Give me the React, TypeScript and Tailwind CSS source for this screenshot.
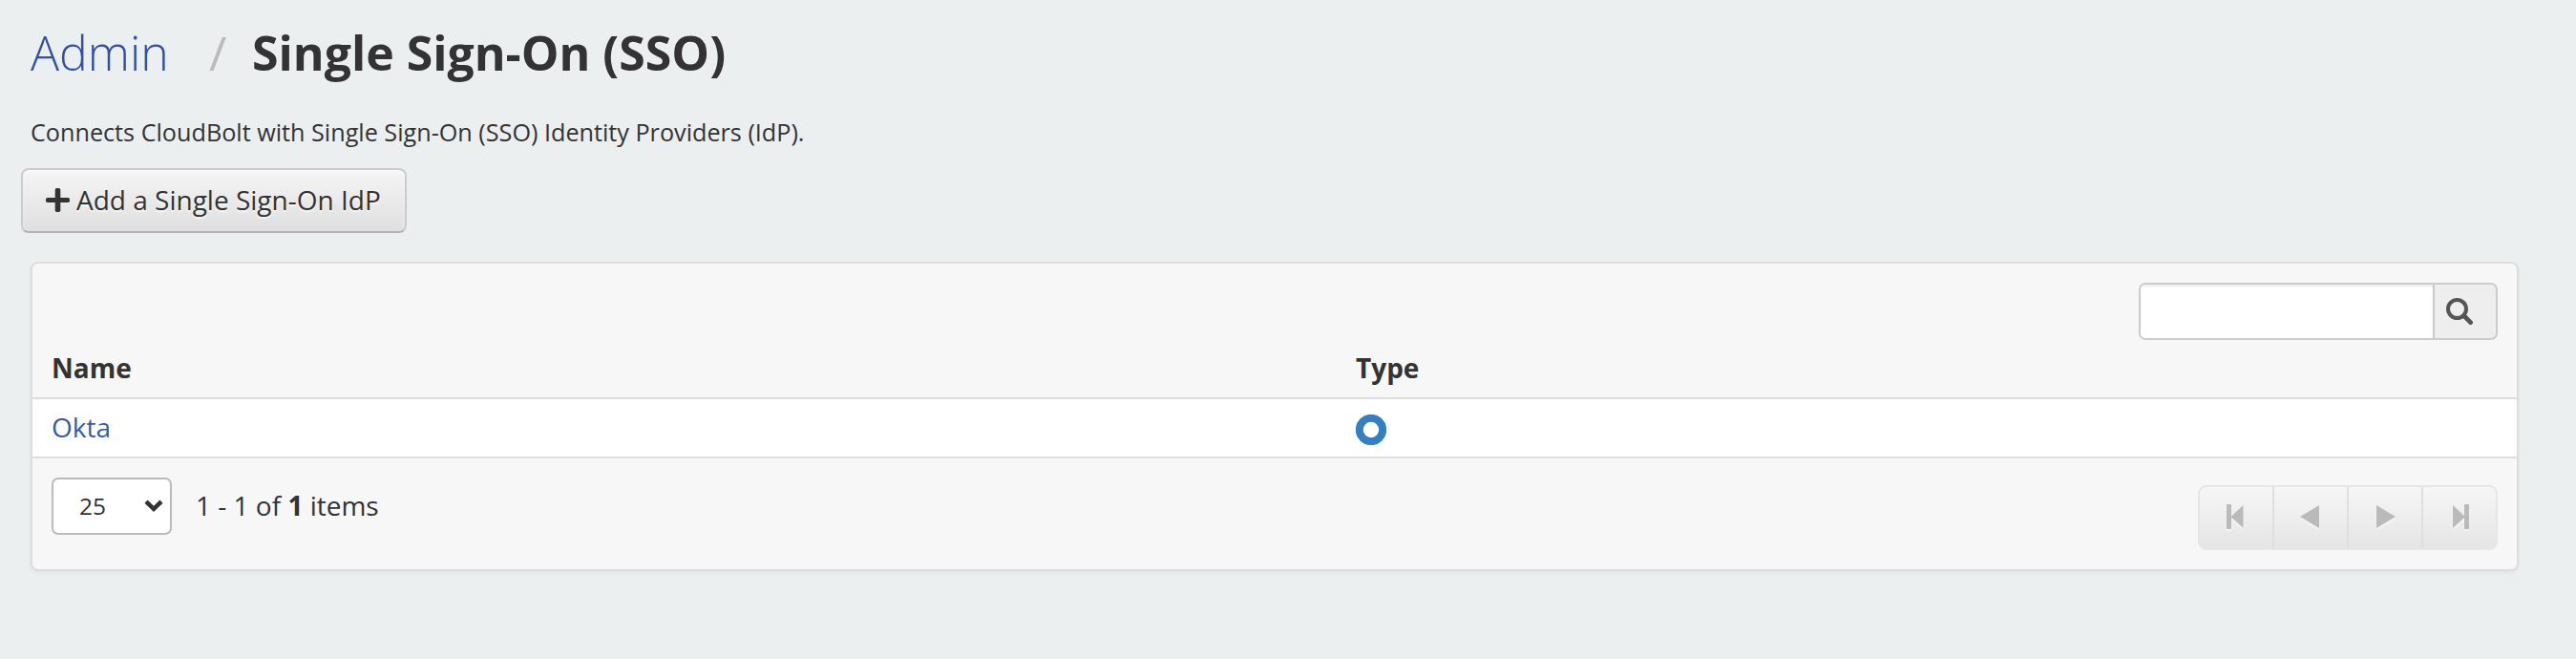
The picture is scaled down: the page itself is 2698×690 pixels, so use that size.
import React from "react";

const pagerButton = "flex h-full shrink-0 items-center justify-center border-[#dfdfdf] pb-0.5";

function PlusIcon() {
  return (
    <svg width="25" height="25" viewBox="0 0 25 25" fill="#333" className="-mt-0.5 shrink-0">
      <rect x="9.7" y="0" width="5.6" height="25" rx="1.8" />
      <rect x="0" y="9.9" width="25" height="5.2" rx="1.8" />
    </svg>
  );
}

function SearchIcon() {
  return (
    <svg width="28" height="28" viewBox="0 0 28 28" fill="none" stroke="#555">
      <circle cx="11.5" cy="11.5" r="9.5" strokeWidth="4" />
      <path d="M18.8 18.8L25.6 25.6" strokeWidth="4.8" strokeLinecap="round" />
    </svg>
  );
}

function Toolbar() {
  return (
    <div className="flex justify-end px-5 pt-5">
      <div className="flex h-[60px] w-[376px] overflow-hidden rounded-[7px] border-2 border-[#ccc] bg-[#eee]">
        <input
          aria-label="Search"
          className="w-[308px] border-r-2 border-[#ccc] bg-white shadow-[inset_0_2px_2px_rgba(0,0,0,0.075)] outline-none"
        />
        <button aria-label="Run search" className="flex flex-1 items-start pt-3.5 pl-3">
          <SearchIcon />
        </button>
      </div>
    </div>
  );
}

function ProviderTable() {
  return (
    <table className="w-full table-fixed border-collapse text-left leading-[38px]">
      <colgroup>
        <col className="w-[1366px]" />
        <col />
      </colgroup>
      <thead>
        <tr>
          <th className="h-[60px] pb-[3px] pl-5 align-middle font-bold">Name</th>
          <th className="h-[60px] pb-[3px] pl-5 align-middle font-bold">Type</th>
        </tr>
      </thead>
      <tbody>
        <tr className="bg-white shadow-[inset_0_2px_0_#ddd,inset_0_-2px_0_#ddd]">
          <td className="h-16 pb-0.5 pl-5 align-middle text-[#3b5aa6]">Okta</td>
          <td className="h-16 pl-5 align-middle">
            <svg width="32" height="32" viewBox="0 0 32 32" className="mt-1 block">
              <circle cx="16" cy="16" r="12.2" fill="none" stroke="#347fc1" strokeWidth="8" />
            </svg>
          </td>
        </tr>
      </tbody>
    </table>
  );
}

function Footer() {
  return (
    <div className="flex items-start justify-between px-5 pt-5">
      <div className="flex h-[60px] items-center">
        <button className="flex h-[60px] w-[126px] items-center justify-between rounded-[7px] border-2 border-[#bbb] bg-white pr-[7px] pl-[27px] text-[24.5px]">
          <span>25</span>
          <svg width="20" height="14" viewBox="0 0 20 14" fill="none" stroke="#333" strokeWidth="4.6">
            <path d="M2 2.2L10 9.8L18 2.2" />
          </svg>
        </button>
        <span className="pb-0.5 pl-[25px]">
          1 - 1 of <b>1</b> items
        </span>
      </div>
      <div className="mt-2 flex h-[68px] w-[314px] rounded-[9px] border-2 border-[#e6e6e6] bg-linear-to-b from-[#f6f6f6] to-[#e5e5e5] [&_svg]:drop-shadow-[0_2px_1px_rgba(255,255,255,0.6)]">
        <button aria-label="First page" className={`${pagerButton} w-[78px] border-r-2 pr-0.5`}>
          <svg width="18" height="26" viewBox="0 0 18 26" fill="#bababa">
            <rect width="5" height="26" rx="1" />
            <path d="M17.500 1v24L4.500 13z" />
          </svg>
        </button>
        <button aria-label="Previous page" className={`${pagerButton} w-[78px] border-r-2 pr-0.5`}>
          <svg width="20" height="26" viewBox="0 0 20 26" fill="#bababa">
            <path d="M0 13L20 1v24z" />
          </svg>
        </button>
        <button aria-label="Next page" className={`${pagerButton} w-[78px] border-r-2 pl-0.5`}>
          <svg width="20" height="26" viewBox="0 0 20 26" fill="#bababa">
            <path d="M20 13L0 1v24z" />
          </svg>
        </button>
        <button aria-label="Last page" className={`${pagerButton} w-[76px] pl-[3px]`}>
          <svg width="17" height="26" viewBox="0 0 17 26" fill="#bababa">
            <rect x="12" width="5" height="26" rx="1" />
            <path d="M0 1v24L13 13z" />
          </svg>
        </button>
      </div>
    </div>
  );
}

export default function App() {
  return (
    <main className="h-[690px] w-full bg-[#ebeff0] pt-5 pr-[60px] pl-8 font-['Open_Sans',sans-serif] text-[28px] text-[#333]">
      <h1 className="flex text-[50px] leading-[70px] whitespace-nowrap">
        <a className="w-[187px] font-light text-[#3050a8]">Admin</a>
        <span className="w-[45px] font-normal text-[#bbb]">/</span>
        <span className="font-bold">Single Sign-On (SSO)</span>
      </h1>
      <p className="mt-7 text-[25.2px] leading-[40px]">
        Connects CloudBolt with Single Sign-On (SSO) Identity Providers (IdP).
      </p>
      <button className="mt-[18px] -ml-2.5 flex h-[68px] w-[404px] items-center gap-[7px] rounded-[8px] border-2 border-[#ccc] border-b-[#b3b3b3] bg-linear-to-b from-[#f5f5f5] to-[#dfdfdf] pl-6 whitespace-nowrap shadow-[inset_0_2px_4px_rgba(255,255,255,0.4)] [text-shadow:0_2px_2px_rgba(255,255,255,0.75)]">
        <PlusIcon />
        <span className="pb-0.5">Add a Single Sign-On IdP</span>
      </button>
      <section className="mt-[30px] h-[324px] rounded-[8px] border-2 border-[#ddd] bg-[#f7f7f7] shadow-[0_2px_4px_rgba(0,0,0,0.05)]">
        <Toolbar />
        <ProviderTable />
        <Footer />
      </section>
    </main>
  );
}
